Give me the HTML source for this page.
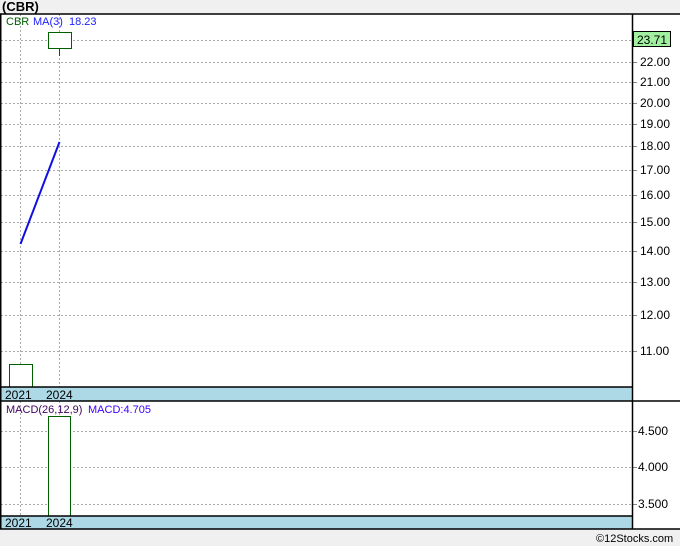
<!DOCTYPE html>
<html><head><style>
html,body{margin:0;padding:0;background:#f0f0f0;}
svg{display:block;font-family:"Liberation Sans",Verdana,sans-serif;}
</style></head><body>
<svg width="680" height="546" viewBox="0 0 680 546" xmlns="http://www.w3.org/2000/svg">
<rect width="680" height="546" fill="#f0f0f0"/>
<text x="2" y="11" font-size="13" font-weight="bold" fill="#000">(CBR)</text>
<rect x="0" y="14" width="680" height="515" fill="#fff"/>
<g stroke="#aaa" stroke-dasharray="2,2" stroke-width="1">
<line x1="1" y1="40.5" x2="632" y2="40.5"/>
<line x1="1" y1="62.5" x2="632" y2="62.5"/>
<line x1="1" y1="82.5" x2="632" y2="82.5"/>
<line x1="1" y1="103.5" x2="632" y2="103.5"/>
<line x1="1" y1="124.5" x2="632" y2="124.5"/>
<line x1="1" y1="146.5" x2="632" y2="146.5"/>
<line x1="1" y1="170.5" x2="632" y2="170.5"/>
<line x1="1" y1="195.5" x2="632" y2="195.5"/>
<line x1="1" y1="222.5" x2="632" y2="222.5"/>
<line x1="1" y1="251.5" x2="632" y2="251.5"/>
<line x1="1" y1="282.5" x2="632" y2="282.5"/>
<line x1="1" y1="315.5" x2="632" y2="315.5"/>
<line x1="1" y1="351.5" x2="632" y2="351.5"/>
<line x1="1" y1="431.5" x2="632" y2="431.5"/>
<line x1="1" y1="467.5" x2="632" y2="467.5"/>
<line x1="1" y1="504.5" x2="632" y2="504.5"/>
<line x1="20.5" y1="14" x2="20.5" y2="387"/>
<line x1="59.5" y1="14" x2="59.5" y2="387"/>
<line x1="20.5" y1="401" x2="20.5" y2="516"/>
<line x1="59.5" y1="401" x2="59.5" y2="516"/>
</g>
<g stroke="#888">
<line x1="632" y1="62.5" x2="637" y2="62.5"/><line x1="632" y1="82.5" x2="637" y2="82.5"/>
<line x1="632" y1="103.5" x2="637" y2="103.5"/><line x1="632" y1="124.5" x2="637" y2="124.5"/>
<line x1="632" y1="146.5" x2="637" y2="146.5"/><line x1="632" y1="170.5" x2="637" y2="170.5"/>
<line x1="632" y1="195.5" x2="637" y2="195.5"/><line x1="632" y1="222.5" x2="637" y2="222.5"/>
<line x1="632" y1="251.5" x2="637" y2="251.5"/><line x1="632" y1="282.5" x2="637" y2="282.5"/>
<line x1="632" y1="315.5" x2="637" y2="315.5"/><line x1="632" y1="351.5" x2="637" y2="351.5"/>
<line x1="632" y1="431.5" x2="637" y2="431.5"/><line x1="632" y1="467.5" x2="637" y2="467.5"/>
<line x1="632" y1="504.5" x2="637" y2="504.5"/>
</g>
<!-- candles -->
<line x1="59.5" y1="49" x2="59.5" y2="56" stroke="#006000"/>
<rect x="48.5" y="32.5" width="23" height="16" fill="#fff" stroke="#006000"/>
<rect x="9.5" y="364.5" width="23" height="23" fill="#fff" stroke="#006000"/>
<line x1="20.5" y1="244" x2="59.5" y2="142" stroke="#1010e0" stroke-width="2"/>
<rect x="48.5" y="416.5" width="22" height="100" fill="#fff" stroke="#006000"/>
<!-- bands -->
<rect x="1" y="387" width="631" height="14" fill="#add8e6"/>
<rect x="1" y="516" width="631" height="13" fill="#add8e6"/>
<g stroke="#000" stroke-width="1.5">
<line x1="0" y1="387" x2="632" y2="387"/><line x1="0" y1="401" x2="680" y2="401"/>
<line x1="0" y1="516" x2="632" y2="516"/><line x1="0" y1="529" x2="680" y2="529"/>
<line x1="0" y1="14" x2="680" y2="14"/>
<line x1="632.5" y1="14" x2="632.5" y2="529"/>
<line x1="0.75" y1="14" x2="0.75" y2="529"/>
</g>
<g font-size="12" fill="#000">
<text x="5" y="399">2021</text><text x="46" y="399">2024</text>
<text x="5" y="527">2021</text><text x="46" y="527">2024</text>
</g>
<g font-size="11">
<text x="6" y="25" fill="#006000">CBR</text>
<text x="33" y="25" fill="#2020ff">MA(3)</text>
<text x="69" y="25" fill="#2020ff">18.23</text>
<text x="6" y="413" fill="#400060">MACD(26,12,9)</text>
<text x="88" y="413" fill="#4000ff">MACD:4.705</text>
</g>
<g font-size="12" fill="#000">
<text x="640" y="66">22.00</text><text x="640" y="86">21.00</text>
<text x="640" y="107">20.00</text><text x="640" y="128">19.00</text>
<text x="640" y="150">18.00</text><text x="640" y="174">17.00</text>
<text x="640" y="199">16.00</text><text x="640" y="226">15.00</text>
<text x="640" y="255">14.00</text><text x="640" y="286">13.00</text>
<text x="640" y="319">12.00</text><text x="640" y="355">11.00</text>
<text x="638" y="435">4.500</text><text x="638" y="471">4.000</text>
<text x="638" y="508">3.500</text>
</g>
<rect x="633.5" y="31.5" width="37" height="15" fill="#a0f0a0" stroke="#000"/>
<text x="637" y="44" font-size="12" fill="#000">23.71</text>
<text x="596" y="542" font-size="11" fill="#000">©12Stocks.com</text>
</svg>
</body></html>
